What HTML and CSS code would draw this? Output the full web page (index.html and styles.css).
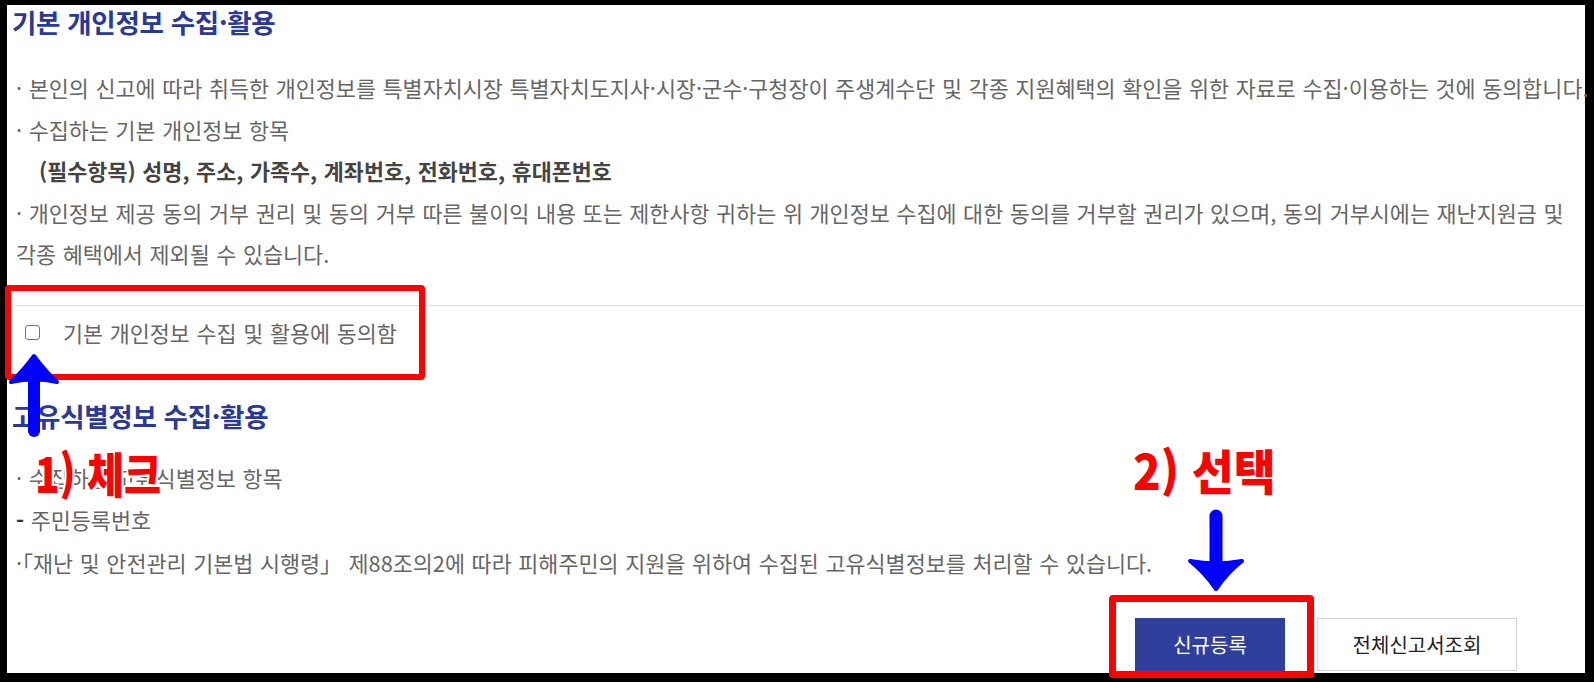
FILE: index.html
```html
<!DOCTYPE html>
<html lang="ko">
<head>
<meta charset="utf-8">
<title>개인정보 수집·활용 동의</title>
<link rel="stylesheet" href="styles.css">
</head>
<body>
<div class="frame">
  <section class="sec">
    <h2 class="title">기본 개인정보 수집·활용</h2>
    <ul class="info">
      <li>· 본인의 신고에 따라 취득한 개인정보를 특별자치시장 특별자치도지사·시장·군수·구청장이 주생계수단 및 각종 지원혜택의 확인을 위한 자료로 수집·이용하는 것에 동의합니다.</li>
      <li>· 수집하는 기본 개인정보 항목</li>
      <li class="req">(필수항목) 성명, 주소, 가족수, 계좌번호, 전화번호, 휴대폰번호</li>
      <li>· 개인정보 제공 동의 거부 권리 및 동의 거부 따른 불이익 내용 또는 제한사항 귀하는 위 개인정보 수집에 대한 동의를 거부할 권리가 있으며, 동의 거부시에는 재난지원금 및</li>
      <li>각종 혜택에서 제외될 수 있습니다.</li>
    </ul>
    <div class="divider"></div>
    <label class="agree"><input type="checkbox" class="chk"><span>기본 개인정보 수집 및 활용에 동의함</span></label>
  </section>
  <section class="sec">
    <h2 class="title title2">고유식별정보 수집·활용</h2>
    <ul class="info info2">
      <li>· 수집하는 고유식별정보 항목</li>
      <li><span class="dash">-</span> 주민등록번호</li>
      <li>·「재난 및 안전관리 기본법 시행령」 제88조의2에 따라 피해주민의 지원을 위하여 수집된 고유식별정보를 처리할 수 있습니다.</li>
    </ul>
  </section>
  <div class="actions">
    <button class="btn btn-primary" type="button">신규등록</button>
    <button class="btn btn-line" type="button">전체신고서조회</button>
  </div>
</div>

<div class="box box1"></div>
<div class="box box2"></div>
<svg class="arrow arrow-up" width="60" height="100" viewBox="4 350 60 100">
  <line x1="34" y1="378" x2="34" y2="431" stroke="#0000ff" stroke-width="12" stroke-linecap="round"/>
  <path d="M34 356 Q45 371 57 382 Q34 377 11 382 Q23 371 34 356 Z" fill="#0000ff" stroke="#0000ff" stroke-width="4" stroke-linejoin="round"/>
</svg>
<svg class="arrow arrow-down" width="70" height="90" viewBox="1171 505 70 90">
  <line x1="1206" y1="516" x2="1206" y2="566" stroke="#0000ff" stroke-width="13" stroke-linecap="round"/>
  <path d="M1206 589 Q1195 573 1180 561 Q1206 566 1232 561 Q1217 573 1206 589 Z" fill="#0000ff" stroke="#0000ff" stroke-width="4" stroke-linejoin="round"/>
</svg>
<div class="note note1">1) 체크</div>
<div class="note note2">2) 선택</div>
</body>
</html>
```
FILE: styles.css
```css
html, body {
  margin: 0;
  padding: 0;
}
body {
  background: #000;
  width: 1594px;
  height: 682px;
  overflow: hidden;
  position: relative;
  font-family: "Noto Sans CJK KR", "Noto Sans", sans-serif;
}
.frame {
  margin: 5px 9px 0 7px;
  height: 668px;
  background: #fff;
}
.title {
  margin: 0;
  padding-left: 5px;
  font-size: 26.5px;
  line-height: 34px;
  font-weight: 700;
  color: #2a3896;
  letter-spacing: -0.3px;
}
.info {
  list-style: none;
  margin: 28px 0 0;
  padding: 0 0 0 9px;
  font-size: 21.8px;
  line-height: 41.5px;
  word-spacing: 0.5px;
  color: #666;
}
.info li {
  white-space: nowrap;
}
.req {
  font-weight: 700;
  color: #444;
  padding-left: 23px;
}
.dash {
  color: #333;
  font-weight: 700;
}
.divider {
  margin: 30px 0 0 7px;
  height: 1px;
  background: #ddd;
}
.agree {
  display: flex;
  align-items: center;
  padding: 6px 0 8px 18px;
  line-height: 42px;
  font-size: 21.8px;
  word-spacing: 0.5px;
  color: #666;
}
.chk {
  appearance: none;
  -webkit-appearance: none;
  width: 15px;
  height: 15px;
  margin: 0 23px 0 0;
  border: 1.5px solid #777;
  border-radius: 3px;
  background: #fff;
  box-sizing: border-box;
}
.title2 {
  margin-top: 37px;
}
.info2 {
  margin-top: 24px;
}
.info2 li {
  line-height: 42.5px;
}
.actions {
  display: flex;
  justify-content: flex-end;
  gap: 32px;
  margin-top: 34px;
  padding-right: 68px;
}
.btn {
  height: 53px;
  box-sizing: border-box;
  display: flex;
  align-items: center;
  justify-content: center;
  font-family: inherit;
  font-size: 20px;
  padding: 0;
  border: 0;
  border-radius: 0;
}
.btn-primary {
  width: 150px;
  background: #313f9c;
  color: #fff;
}
.btn-line {
  width: 200px;
  border: 1px solid #d5d5d5;
  background: #fff;
  color: #222;
  font-size: 20px;
}
.box {
  position: absolute;
  box-sizing: border-box;
  border: 6px solid #ff0000;
  border-radius: 4px;
}
.box1 {
  left: 5px;
  top: 285px;
  width: 420px;
  height: 95px;
}
.box2 {
  left: 1109px;
  top: 595px;
  width: 205px;
  height: 83px;
  border-width: 7px;
}
.arrow {
  position: absolute;
}
.arrow-up {
  left: 4px;
  top: 350px;
}
.arrow-down {
  left: 1181px;
  top: 505px;
}
.note {
  position: absolute;
  color: #ff0000;
  font-weight: 900;
  font-size: 48px;
  line-height: 1;
  white-space: nowrap;
  transform-origin: left top;
  transform: scaleX(0.84);
  text-shadow: 2px 0 #fff, -2px 0 #fff, 0 2px #fff, 0 -2px #fff, 2px 2px #fff, -2px -2px #fff, 2px -2px #fff, -2px 2px #fff;
}
.note1 {
  left: 35px;
  top: 448px;
}
.note2 {
  left: 1133px;
  top: 445px;
  transform: scaleX(0.95);
}
```
